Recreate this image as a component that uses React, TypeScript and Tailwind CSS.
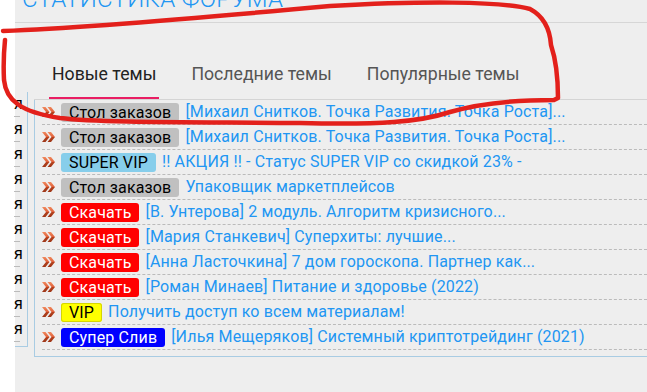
import React from "react";

type Topic = { tag: string; tagClass: string; title: string };

const topics: Topic[] = [
  { tag: "Стол заказов", tagClass: "bg-[#c0c0c0] text-black", title: "[Михаил Снитков. Точка Развития. Точка Роста]..." },
  { tag: "Стол заказов", tagClass: "bg-[#c0c0c0] text-black", title: "[Михаил Снитков. Точка Развития. Точка Роста]..." },
  { tag: "SUPER VIP", tagClass: "bg-[#87ceeb] text-black", title: "!! АКЦИЯ !! - Статус SUPER VIP со скидкой 23% -" },
  { tag: "Стол заказов", tagClass: "bg-[#c0c0c0] text-black", title: "Упаковщик маркетплейсов" },
  { tag: "Скачать", tagClass: "bg-[#ff0000] text-white", title: "[В. Унтерова] 2 модуль. Алгоритм кризисного..." },
  { tag: "Скачать", tagClass: "bg-[#ff0000] text-white", title: "[Мария Станкевич] Суперхиты: лучшие..." },
  { tag: "Скачать", tagClass: "bg-[#ff0000] text-white", title: "[Анна Ласточкина] 7 дом гороскопа. Партнер как..." },
  { tag: "Скачать", tagClass: "bg-[#ff0000] text-white", title: "[Роман Минаев] Питание и здоровье (2022)" },
  { tag: "VIP", tagClass: "bg-[#ffff00] text-black ring-1 ring-inset ring-[#d6d600]", title: "Получить доступ ко всем материалам!" },
  { tag: "Супер Слив", tagClass: "bg-[#0000ff] text-white", title: "[Илья Мещеряков] Системный криптотрейдинг (2021)" },
];

function Chevrons() {
  return (
    <svg width="13" height="10" viewBox="0 0 13 10" className="shrink-0">
      <defs>
        <linearGradient id="chev" x1="0" y1="0" x2="0" y2="1">
          <stop offset="0" stopColor="#f08a5e" />
          <stop offset="0.5" stopColor="#e0603a" />
          <stop offset="0.51" stopColor="#b8431f" />
          <stop offset="1" stopColor="#9c3516" />
        </linearGradient>
      </defs>
      <path d="M0 0h3.5l4 5-4 5H0l4-5z M5.5 0H9l4 5-4 5H5.5l4-5z" fill="url(#chev)" />
    </svg>
  );
}

export default function App() {
  return (
    <div className="relative flex h-[392px] w-[647px] overflow-hidden bg-white font-['Roboto',sans-serif]">
      <div className="w-[15px] shrink-0 bg-white" />
      <div className="flex-1 bg-[#eeeeee]">
        {/* header */}
        <div className="h-[23px] overflow-hidden border-b border-[#d6d6d6] pl-[7px]">
          <div className="-mt-[15px] text-[24px] font-light leading-[28px] tracking-[0.3px] text-[#2196f3]">
            СТАТИСТИКА ФОРУМА
          </div>
        </div>

        <div className="flex">
          {/* left cut-off panel */}
          <div className="mt-[69px] h-[255px] w-[13px] shrink-0 border-r border-b border-[#a9cce3] pb-[4px]">
            {topics.map((_, i) => (
              <div key={i} className="h-[25px] text-[16px] leading-[25px] text-black">
                <div className="-ml-[1px] w-[6px] border-b border-dashed border-[#bbbbbb] leading-[24px]">я</div>
              </div>
            ))}
          </div>

          <div className="ml-[6px] flex-1">
            {/* tabs */}
            <div className="flex h-[77px] items-end gap-[29px] border-b border-[#d4d4d4] pl-[15px]">
              <div className="border-b-2 border-[#e91e63] px-[3px] pb-[12px] text-[17.7px] leading-[21px] text-[#222222]">
                Новые темы
              </div>
              <div className="border-b-2 border-transparent px-[3px] pb-[12px] text-[17.7px] leading-[21px] text-[#555555]">
                Последние темы
              </div>
              <div className="border-b-2 border-transparent px-[3px] pb-[12px] text-[17.7px] leading-[21px] text-[#555555]">
                Популярные темы
              </div>
            </div>

            {/* topics */}
            <div className="border-l border-b border-[#a9cce3] pb-[6px] pl-[7px]">
              {topics.map((t, i) => (
                <div
                  key={i}
                  className="flex h-[25px] items-center gap-[6px] whitespace-nowrap border-b border-dashed border-[#bbbbbb] text-[16px] tracking-[0.15px]"
                >
                  <Chevrons />
                  <span className={`rounded-[3px] px-[8px] leading-[19px] ${t.tagClass}`}>{t.tag}</span>
                  <span className="text-[#2196f3]">{t.title}</span>
                </div>
              ))}
            </div>
          </div>
        </div>
      </div>

      {/* hand-drawn annotation */}
      <svg className="pointer-events-none absolute inset-0" width="647" height="392" viewBox="0 0 647 392">
        <path
          d="M3 31 C80 28 200 18 330 6 C420 1 500 1 530 9 C545 17 550 30 551 45 C556 60 558 80 558 98 L554 100 C520 100 480 103 450 112 C420 122 380 125 300 123 C200 122 100 123 60 118 C20 112 6 100 4 80 C3 60 4 50 5 40"
          fill="none"
          stroke="#e3201b"
          strokeWidth="4.5"
          strokeLinecap="round"
          strokeLinejoin="round"
        />
      </svg>
    </div>
  );
}
